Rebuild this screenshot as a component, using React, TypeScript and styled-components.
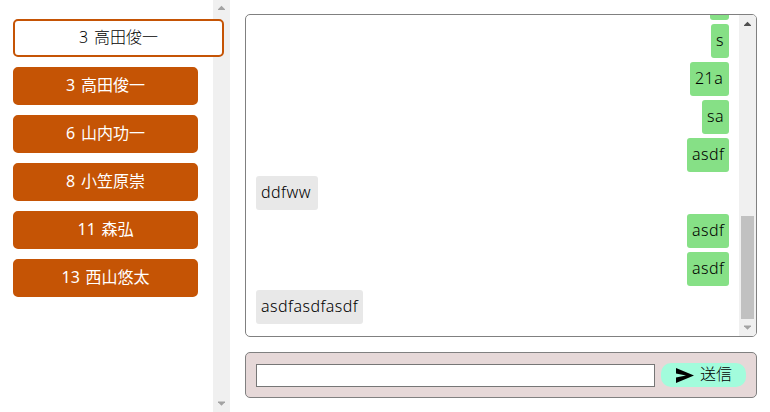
import React from 'react';
import styled, { createGlobalStyle } from 'styled-components';

const GlobalStyle = createGlobalStyle`
  *, *::before, *::after { box-sizing: border-box; }
  body {
    margin: 0;
    background: #fff;
    color: #000;
    font: 16px/24px "Noto Sans", "Noto Sans CJK JP", sans-serif;
    overflow: hidden;
  }
`;

const Page = styled.div`
  display: flex;
  gap: 15px;
  height: 412px;
`;

const Sidebar = styled.aside`
  display: flex;
  width: 230px;
`;

const MemberList = styled.nav`
  display: flex;
  flex-direction: column;
  gap: 10px;
  width: 213px;
  padding: 19px 0 0 13px;
`;

const Member = styled.button<{ $selected?: boolean }>`
  flex: none;
  width: ${(p) => (p.$selected ? 211 : 185)}px;
  height: 38px;
  padding: 0 0 2px;
  border: 2px solid #c55405;
  border-radius: 5px;
  background: ${(p) => (p.$selected ? '#fff' : '#c55405')};
  color: ${(p) => (p.$selected ? '#000' : '#fff')};
  font: inherit;
  font-weight: ${(p) => (p.$selected ? 300 : 400)};
  line-height: 24px;
  word-spacing: 1.5px;
  white-space: nowrap;
  z-index: 1;
`;

const ScrollTrack = styled.div`
  display: flex;
  flex-direction: column;
  align-items: center;
  flex: none;
  width: 17px;
  background: #f0f0f0;
`;

const Arrow = styled.svg<{ $dark?: boolean }>`
  display: block;
  flex: none;
  width: 17px;
  height: 17px;
  fill: ${(p) => (p.$dark ? '#505050' : '#a3a3a3')};
`;

const Spacer = styled.div`
  flex: 1;
`;

const Thumb = styled.div`
  width: 13px;
  height: 103px;
  background: #c1c1c1;
`;

const Main = styled.main`
  display: flex;
  flex-direction: column;
  gap: 15px;
  width: 512px;
  padding-top: 14px;
`;

const ChatPanel = styled.section`
  display: flex;
  height: 323px;
  border: 1px solid #808080;
  border-radius: 5px;
  overflow: hidden;
`;

const Messages = styled.div`
  display: flex;
  flex: 1;
  flex-direction: column;
  justify-content: flex-end;
  gap: 4px;
  padding: 0 10px 12px;
  overflow: hidden;
`;

const Bubble = styled.div<{ $own: boolean; $width: number }>`
  flex: none;
  align-self: ${(p) => (p.$own ? 'flex-end' : 'flex-start')};
  width: ${(p) => p.$width}px;
  height: 34px;
  padding: 4px 0 0 5px;
  border-radius: 3px;
  background: ${(p) => (p.$own ? '#86e086' : '#e8e8e8')};
  color: #000;
  font-weight: 300;
  letter-spacing: 0.45px;
  white-space: nowrap;
`;

const Composer = styled.form`
  display: flex;
  gap: 6px;
  height: 46px;
  padding: 10px 10px 0;
  border: 1px solid #808080;
  border-radius: 5px;
  background: #e6d8d8;
`;

const MessageInput = styled.input`
  width: 399px;
  height: 23px;
  margin: 1px 0 0;
  padding: 1px 2px;
  border: 1px solid #767676;
  border-radius: 0;
  background: #fff;
  font: inherit;
`;

const SendButton = styled.button`
  display: flex;
  align-items: flex-start;
  width: 85px;
  height: 24px;
  padding: 0 0 0 15px;
  border: 0;
  border-radius: 10px;
  background: #a2fcdc;
  color: #000;
  font: 300 16px/20px "Noto Sans CJK JP", sans-serif;
  white-space: nowrap;
`;

const SendIcon = styled.svg`
  flex: none;
  width: 18px;
  height: 15px;
  margin: 5px 6px 0 0;
`;

const members = ['3 高田俊一', '6 山内功一', '8 小笠原崇', '11 森弘', '13 西山悠太'];

const messages = [
  { text: '', own: true, width: 19 },
  { text: 's', own: true, width: 18 },
  { text: '21a', own: true, width: 39 },
  { text: 'sa', own: true, width: 27 },
  { text: 'asdf', own: true, width: 42 },
  { text: 'ddfww', own: false, width: 62 },
  { text: 'asdf', own: true, width: 42 },
  { text: 'asdf', own: true, width: 42 },
  { text: 'asdfasdfasdf', own: false, width: 107 },
];

const UpArrow = ({ dark }: { dark?: boolean }) => (
  <Arrow $dark={dark} viewBox={dark ? '0 -1 17 17' : '0 0 17 17'}>
    <path d="M5 10h7v-.8L8.5 5.8 5 9.2z" />
  </Arrow>
);

const DownArrow = () => (
  <Arrow viewBox="0 0 17 17"><path d="M5 6.5h7v.8l-3.5 3.4L5 7.3z" /></Arrow>
);

export default function App() {
  return (
    <>
      <GlobalStyle />
      <Page>
        <Sidebar>
          <MemberList>
            <Member $selected>3 高田俊一</Member>
            {members.map((name) => <Member key={name}>{name}</Member>)}
          </MemberList>
          <ScrollTrack>
            <UpArrow />
            <Spacer />
            <DownArrow />
          </ScrollTrack>
        </Sidebar>
        <Main>
          <ChatPanel>
            <Messages>
              {messages.map((m, i) => (
                <Bubble key={i} $own={m.own} $width={m.width}>{m.text}</Bubble>
              ))}
            </Messages>
            <ScrollTrack>
              <UpArrow dark />
              <Spacer />
              <Thumb />
              <DownArrow />
            </ScrollTrack>
          </ChatPanel>
          <Composer onSubmit={(e) => e.preventDefault()}>
            <MessageInput />
            <SendButton>
              <SendIcon viewBox="0 0 18 15">
                <path d="M0 0 18 7.5 0 15V9.5L10 7.5 0 5.5z" />
              </SendIcon>
              送信
            </SendButton>
          </Composer>
        </Main>
      </Page>
    </>
  );
}
